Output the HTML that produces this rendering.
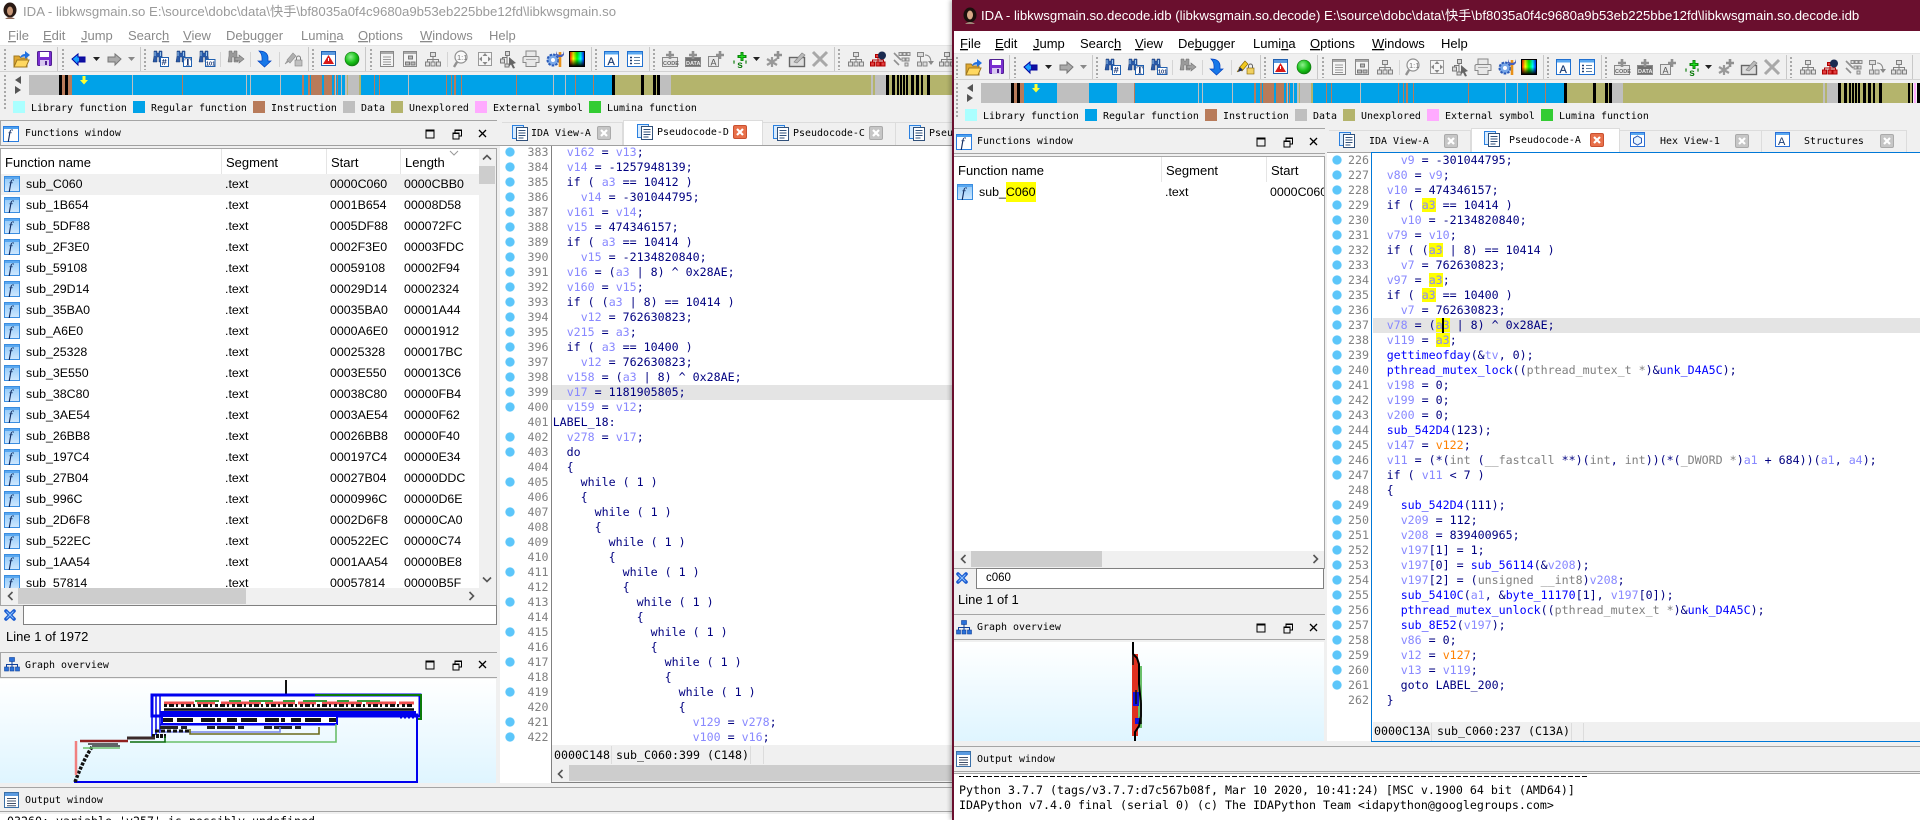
<!DOCTYPE html>
<html><head><meta charset="utf-8"><title>IDA</title>
<style>
html,body{margin:0;padding:0;width:1920px;height:820px;overflow:hidden;background:#f0f0f0}
#L,#R{position:absolute;top:0;height:820px;overflow:hidden;background:#f0f0f0;font:13px "Liberation Sans","Noto Sans CJK SC",sans-serif;color:#000}
#L{left:0;width:952px}
#R{left:952px;width:968px;box-shadow:-2px 0 4px rgba(0,0,0,.25)}
#R:before{content:"";position:absolute;left:0;top:0;width:1.5px;height:820px;background:#6a0f2e;z-index:9}
.a,.t,.ph,pre,svg.o{position:absolute}
.t{white-space:pre}
svg.o{left:0;top:0;overflow:visible}
.ph{background:#f0f0f0;border:1px solid #a5a5a5;border-width:1px 0 1px 1px;height:24px;box-sizing:content-box}
.m{font:9.96px "DejaVu Sans Mono",monospace;line-height:14px;white-space:pre;margin-top:1px}
pre{margin:0;font:11.63px/15px "DejaVu Sans Mono",monospace;color:#000080;white-space:pre}
pre b,pre i,pre u,pre s{font-weight:normal;font-style:normal;text-decoration:none}
pre b{color:#8888ff}pre i{color:#808080}pre u{color:#0000ff}pre s{color:#ff8000}
pre mark{background:#ffff00;color:#8888ff;padding:0}
.n{color:#808080}
.dot{position:absolute;width:10px;background:radial-gradient(circle at 5px 7px,#5cc6fa 4.2px,rgba(92,198,250,0) 5px) 0 0/10px 15px repeat-y}
.dot2{background-size:10px 30px}
.tab{position:absolute;box-sizing:border-box;background:#f0f0f0;border-top:1px solid #dcdcdc;border-right:1px solid #dcdcdc}
.tab.on{background:#fff;border:1px solid #dcdcdc;border-bottom:0}
.r{position:relative;height:21px;font-size:12.4px;line-height:21px;white-space:pre}
.r span{position:absolute;top:0}
.r svg{position:absolute;left:4px;top:2px;width:16px;height:16px}
.r span:nth-of-type(1){left:26px}
.r span:nth-of-type(2){left:225px}
.r span:nth-of-type(3){left:330px}
.r span:nth-of-type(4){left:404px}
.thumb{position:absolute;background:#cdcdcd}
.sb{position:absolute;background:#f0f0f0}
</style></head><body>
<svg style="position:absolute;width:0;height:0"><defs>
<linearGradient id="gf" x1="0" y1="0" x2="0" y2="1"><stop offset="0" stop-color="#8fc8f8"/><stop offset="1" stop-color="#cfe8ff"/></linearGradient>
<radialGradient id="gg" cx=".4" cy=".35" r=".7"><stop offset="0" stop-color="#8ff08f"/><stop offset=".6" stop-color="#18c018"/><stop offset="1" stop-color="#0a800a"/></radialGradient>
<linearGradient id="pal" x1="0" y1="0" x2="1" y2="0"><stop offset="0" stop-color="#f00"/><stop offset=".25" stop-color="#ff0"/><stop offset=".5" stop-color="#0f0"/><stop offset=".75" stop-color="#0ff"/><stop offset="1" stop-color="#00f"/></linearGradient>
<linearGradient id="gfade" x1="0" y1="0" x2="0" y2="1"><stop offset="0" stop-color="#fff"/><stop offset="1" stop-color="#dff5ff"/></linearGradient>
<linearGradient id="palv" x1="0" y1="0" x2="0" y2="1"><stop offset="0" stop-color="#000" stop-opacity=".2"/><stop offset=".5" stop-color="#000" stop-opacity="0"/><stop offset="1" stop-color="#000" stop-opacity=".95"/></linearGradient>
<symbol id="fi" viewBox="0 0 16 16"><rect x=".5" y=".5" width="15" height="15" fill="url(#gf)" stroke="#3a8de0"/><rect x="1" y="1" width="14" height="2" fill="#5aa8f0"/><text x="4.5" y="13" font-family="Liberation Serif" font-style="italic" font-size="14" fill="#102a60">f</text></symbol>
<symbol id="fh" viewBox="0 0 16 16"><rect x=".5" y=".5" width="15" height="15" fill="#fff" stroke="#2a7de0"/><rect x="1" y="1" width="14" height="2" fill="#4aa0f0"/><text x="4.5" y="13" font-family="Liberation Serif" font-style="italic" font-size="14" fill="#102a60">f</text></symbol>
<symbol id="doc" viewBox="0 0 16 16"><rect x=".5" y=".5" width="11" height="13" fill="#d8ecff" stroke="#2a80e0"/><rect x="4.5" y="2.5" width="11" height="13" fill="#fff" stroke="#30507a"/><path d="M6.5 5.5h7M6.5 8h7M6.5 10.500h7M6.5 13h5" stroke="#30507a"/></symbol>
<symbol id="cl" viewBox="0 0 14 14"><rect x=".5" y=".5" width="13" height="13" rx="1.500" fill="#c6c6c6" stroke="#aaa"/><path d="M4 4l6 6M10 4l-6 6" stroke="#fff" stroke-width="2.200"/></symbol>
<symbol id="cr" viewBox="0 0 14 14"><rect x=".5" y=".5" width="13" height="13" rx="1.500" fill="#e8704a" stroke="#c85030"/><path d="M4 4l6 6M10 4l-6 6" stroke="#fff" stroke-width="2.200"/></symbol>
<symbol id="tree" viewBox="0 0 16 15"><g fill="#2a70d8" stroke="#10409a" stroke-width=".6"><rect x="5.500" y=".5" width="5" height="4"/><rect x=".5" y="10" width="4" height="4"/><rect x="6" y="10" width="4" height="4"/><rect x="11.500" y="10" width="4" height="4"/></g><path d="M8 4.500v5.500M2.500 10V7.500h11V10" stroke="#10409a" fill="none"/></symbol>
<symbol id="out" viewBox="0 0 16 16"><rect x=".5" y=".5" width="14" height="15" fill="#fff" stroke="#3a70a8"/><rect x="1" y="1" width="13" height="3" fill="#5a9ae0"/><path d="M3 6.500h9M3 9h9M3 11.500h9M3 13.800h9" stroke="#40506a"/></symbol>
<symbol id="xx" viewBox="0 0 12 12"><path d="M2 2l8 8M10 2l-8 8" stroke="#1c5cd0" stroke-width="3.600" stroke-linecap="round"/><path d="M2.500 2.500l7 7M9.500 2.500l-7 7" stroke="#8cc4ff" stroke-width="1"/></symbol>
<symbol id="btn" viewBox="0 0 62 12"><rect x="1" y="2" width="8" height="8" fill="none" stroke="#000"/><path d="M1 2.500h8" stroke="#000" stroke-width="2"/><rect x="28" y="5" width="6" height="6" fill="none" stroke="#000"/><path d="M30 4.500V2h6.500v6H34" fill="none" stroke="#000"/><path d="M28 5.500h6M30 2.500h6.500" stroke="#000"/><path d="M54 2l7 7M61 2l-7 7" stroke="#000" stroke-width="1.300"/></symbol>
<g id="bino"><path d="M1 0h3v2h2V0h3v5l1 6H6V6H4v5H0l1-6z" fill="#2a5aa8" stroke="#1a3a70" stroke-width=".5"/><path d="M2 1v4M7.500 1v4" stroke="#9ac8f0"/></g>
<g id="binog"><path d="M1 0h3v2h2V0h3v5l1 6H6V6H4v5H0l1-6z" fill="#9a9a9a" stroke="#6a6a6a" stroke-width=".5"/></g>
<g id="grip"><path d="M0 0V21" stroke="#a8a8a8" stroke-width="2" stroke-dasharray="2 2"/></g>
<g id="grt"><g fill="#e0e0e0" stroke="#808080"><rect x="5.500" y=".5" width="5" height="4"/><rect x=".5" y="10" width="4" height="4"/><rect x="6" y="10" width="4" height="4"/><rect x="11.500" y="10" width="4" height="4"/></g><path d="M8 4.500v5.500M2.500 10V7.500h11V10" stroke="#808080" fill="none"/></g>
<g id="menu" font-size="13" fill="currentColor" font-family="Liberation Sans">
<text x="8" y="40"><tspan style="text-decoration:underline">F</tspan>ile</text>
<text x="43" y="40"><tspan style="text-decoration:underline">E</tspan>dit</text>
<text x="81" y="40"><tspan style="text-decoration:underline">J</tspan>ump</text>
<text x="128" y="40">Searc<tspan style="text-decoration:underline">h</tspan></text>
<text x="183" y="40"><tspan style="text-decoration:underline">V</tspan>iew</text>
<text x="226" y="40">De<tspan style="text-decoration:underline">b</tspan>ugger</text>
<text x="301" y="40">Lumi<tspan style="text-decoration:underline">n</tspan>a</text>
<text x="358" y="40"><tspan style="text-decoration:underline">O</tspan>ptions</text>
<text x="420" y="40"><tspan style="text-decoration:underline">W</tspan>indows</text>
<text x="489" y="40">Help</text>
</g>
<g id="tb">
<rect x="0" y="46" width="968" height="25" fill="#f0f0f0"/>
<path d="M0 45.500H968" stroke="#e4e4e4"/><path d="M0 71.500H968" stroke="#d2d2d2"/>
<path d="M57.500 47v24M140.500 47v24M308.500 47v24M365.500 47v24M591.500 47v24M649.500 47v24M834.500 47v24M960.500 47v24" stroke="#c8c8c8"/>
<path d="M220.500 52v15M250.500 52v15M279.500 52v15M447.500 52v15" stroke="#d4d4d4"/>
<use href="#grip" x="5" y="49"/><use href="#grip" x="63" y="49"/><use href="#grip" x="145" y="49"/><use href="#grip" x="313" y="49"/><use href="#grip" x="371" y="49"/><use href="#grip" x="596" y="49"/><use href="#grip" x="654" y="49"/><use href="#grip" x="839" y="49"/>
<path d="M5 75V111" stroke="#a8a8a8" stroke-width="2" stroke-dasharray="2 2"/>
<path d="M14 56h5l2 2h6v9H14z" fill="#e0a830" stroke="#a07820"/><path d="M14 67l3-7h12l-3 7z" fill="#ffd860" stroke="#a07820"/><path d="M20 58q1-4 5-4v-3l5 4-5 4v-2.500q-3 0-5 1.500z" fill="#2070e0"/>
<rect x="37.500" y="51.500" width="14" height="14" rx="1" fill="#7a2ed0" stroke="#502090"/><rect x="40" y="52" width="9" height="5" fill="#fff"/><rect x="40" y="60" width="9" height="6" fill="#d8c8f0"/><rect x="45" y="61" width="2" height="4" fill="#502090"/>
<path d="M72 59l6-5v3h7v5h-7v3z" fill="#19a0ff" stroke="#0000a0"/><path d="M79 57.500h6v4h-6z" fill="#1010a0"/>
<path d="M93 57h7l-3.500 4z" fill="#222"/><path d="M128 57h7l-3.500 4z" fill="#888"/>
<path d="M121 59l-6-5v3h-7v5h7v3z" fill="#aaa" stroke="#777"/>
<use href="#bino" x="153" y="51"/><rect x="160.500" y="57.500" width="8" height="9" fill="#fff" stroke="#2060b0"/><text x="161.500" y="65" font-size="9" font-weight="bold" font-family="Liberation Mono" fill="#103070">#</text>
<use href="#bino" x="176" y="51"/><rect x="183.500" y="57.500" width="8" height="9" fill="#fff" stroke="#2060b0"/><text x="184.500" y="65.500" font-size="10" font-weight="bold" font-family="Liberation Serif" fill="#103070">T</text>
<use href="#bino" x="199" y="51"/><rect x="205.500" y="59.500" width="9.500" height="7" fill="#fff" stroke="#2060b0"/><text x="206" y="65.500" font-size="5.500" font-weight="bold" font-family="Liberation Sans" fill="#103070">101</text>
<use href="#binog" x="228" y="51"/><path d="M244 59l-5-4v2.500h-4v3h4V63z" fill="#a0a0a0" stroke="#707070" stroke-width=".6"/>
<path d="M259 51q8 0 9 6v4h3l-6.500 6-6.500-6h4v-3q0-4-3-7z" fill="#1878e8" stroke="#0040c0" stroke-width=".7"/>
<rect x="321.500" y="51.500" width="14" height="14" fill="#fff" stroke="#2060b0"/><rect x="322" y="52" width="13" height="3" fill="#5a9ae0"/><path d="M328.500 55l5.500 9h-11z" fill="#d81818"/><path d="M328.500 58v3" stroke="#fff"/>
<circle cx="352" cy="59" r="7" fill="url(#gg)" stroke="#0a700a" stroke-width=".6"/>
<rect x="380.500" y="51.500" width="13" height="15" fill="#f4f4f4" stroke="#888"/><rect x="381" y="52" width="12" height="2" fill="#aaa"/><path d="M383 57h8M383 59.500h8M383 62h8M383 64.500h8" stroke="#999"/>
<rect x="403.500" y="51.500" width="13" height="15" fill="#f4f4f4" stroke="#888"/><rect x="404" y="52" width="12" height="2" fill="#aaa"/><g fill="#bbb" stroke="#777"><rect x="408.500" y="56" width="4" height="3"/><rect x="405.500" y="62" width="4" height="3"/><rect x="411" y="62" width="4" height="3"/></g>
<use href="#grt" x="425" y="52"/>
<circle cx="461" cy="57" r="6" fill="#fafafa" stroke="#909090" stroke-width="1.200"/><path d="M457 62l-3 5" stroke="#909090" stroke-width="2.400"/><text x="457" y="60" font-size="7.500" font-family="Liberation Sans" fill="#707070">1:1</text>
<rect x="478.500" y="52.500" width="13" height="13" fill="#f6f6f6" stroke="#999"/><path d="M485 53l2.500 3h-5zM485 65l2.500-3h-5zM479 59l3-2.500v5zM491 59l-3-2.500v5z" fill="#888"/>
<g transform="translate(500 51)"><g fill="#d8d8d8" stroke="#777"><rect x="5.500" y=".5" width="4" height="4"/><rect x=".5" y="8" width="4" height="4"/><rect x="5" y="13" width="4" height="3"/></g><path d="M7 4.500v8M2.500 8V6.500h5" stroke="#777" fill="none"/><path d="M9 6l7 6-3 1 2 4-2 .5-2-4-2 2z" fill="#666"/></g>
<path d="M526 56v-5h10v5M524 56.500h14a1 1 0 0 1 1 1v5h-3v4h-10v-4h-3v-5z" fill="#e8e8e8" stroke="#888"/><path d="M526 59.500h10" stroke="#aaa"/>
<circle cx="553" cy="60" r="5.500" fill="#7aa8e8" stroke="#2a5ab8" stroke-width="2" stroke-dasharray="2.500 1.200"/><circle cx="553" cy="60" r="2" fill="#fff"/><path d="M560 52v15" stroke="#e89018" stroke-width="2.600"/><path d="M556 51l1 3 3 1 3-1 1-3v4l-2 2h-4l-2-2z" fill="#4a60b8"/>
<rect x="569.500" y="51.500" width="15" height="15" fill="url(#pal)" stroke="#000"/><rect x="570" y="52" width="14" height="14" fill="url(#palv)"/>
<rect x="604.500" y="51.500" width="14" height="15" fill="#fff" stroke="#2070d0"/><rect x="605" y="52" width="13" height="2.500" fill="#5aa8f0"/><text x="607.500" y="65" font-size="11" font-family="Liberation Sans" fill="#1a3a70" stroke="#1a3a70" stroke-width=".2">A</text>
<rect x="627.500" y="51.500" width="15" height="15" fill="#fff" stroke="#2070d0"/><rect x="628" y="52" width="14" height="2.500" fill="#5aa8f0"/><path d="M630 57.500h2M630 60.500h2M630 63.500h2" stroke="#1a3a70" stroke-width="1.400"/><path d="M634 57.500h6M634 60.500h6M634 63.500h6" stroke="#6080a0"/>
<g fill="#e8e8e8" stroke="#888"><rect x="662.500" y="57.500" width="15" height="9"/><rect x="685.500" y="57.500" width="15" height="9" fill="#707070"/><rect x="708.500" y="56.500" width="10" height="10"/></g>
<text x="663" y="65" font-size="5.500" font-weight="bold" font-family="Liberation Sans" fill="#666">CODE</text><text x="686" y="65" font-size="5.500" font-weight="bold" font-family="Liberation Sans" fill="#eee">DATA</text><text x="710.500" y="65.500" font-size="9" font-family="Liberation Sans" fill="#555">A</text>
<path d="M670 51v8M666 55h8M693 51v8M689 55h8M720 51v8M716 55h8" stroke="#909090" stroke-width="2.600"/>
<path d="M742 52v9M737.500 56.500h9" stroke="#0a8a0a" stroke-width="3"/><path d="M742 53v7M739 56.500h6" stroke="#20e020" stroke-width="1"/><text x="731" y="68" font-size="10" font-weight="bold" font-family="Liberation Mono" fill="#0a7a0a">'s'</text>
<path d="M753 57h7l-3.500 4z" fill="#222"/>
<path d="M772 57v10M767 59l10 6M767 65l10-6" stroke="#999" stroke-width="2.200"/><path d="M778 51v8M774 55h8" stroke="#909090" stroke-width="2.600"/>
<rect x="789.500" y="57.500" width="15" height="9" fill="#ddd" stroke="#666" stroke-width="1.400"/><path d="M794 62l8-9 3 2-8 8z" fill="#bbb" stroke="#888" stroke-width=".7"/>
<path d="M813 52l14 14M827 52l-14 14" stroke="#a8a8a8" stroke-width="3"/>
<use href="#grt" x="848" y="52"/>
<g transform="translate(870 52)"><g fill="#e04040" stroke="#b00000"><rect x="5.500" y="2.500" width="4" height="3"/><rect x=".5" y="10" width="4" height="4"/><rect x="6" y="10" width="4" height="4"/><rect x="11" y="10" width="4" height="4"/></g><path d="M8 5.500v4.500M2.500 10V8h11v2" stroke="#b00000" fill="none"/><circle cx="12" cy="3.500" r="4" fill="#1a2a50"/></g>
<g transform="translate(893 52)"><path d="M1 1l7 7M1 8l5 5" stroke="#909090" stroke-width="1.600"/><g fill="#ddd" stroke="#888"><rect x="6" y=".5" width="3" height="3"/><rect x="10" y=".5" width="3" height="3"/><rect x="14" y=".5" width="3" height="3"/><rect x="9" y="6" width="3" height="3"/><rect x="13" y="6" width="3" height="3"/><rect x="12" y="11" width="3" height="3"/></g></g>
<g transform="translate(917 52)"><g fill="#ddd" stroke="#888"><rect x=".5" y=".5" width="6" height="4"/><rect x=".5" y="10" width="4" height="4"/><rect x="6" y="10" width="4" height="4"/></g><path d="M3.500 4.500V10M8 3q6 0 6 8" fill="none" stroke="#888"/><path d="M11 9l3 4 3-4z" fill="#888"/></g>
<use href="#grt" x="939" y="52"/>
<path d="M15 80l6-4v8zM21 90l-6-4v8z" fill="#555"/>
<g fill="none" stroke-width="20">
<path stroke="#00a2e8" d="M29 85H612"/>
<path stroke="#bfbfbf" d="M29 85H59M246 85h1M250 85h1M280 85h1M132 85h1M345 85h14M335 85h1M341 85h1M408 85h1M553 85h1M565 85h1M660 85h11M871 85h2M875 85h11"/>
<path stroke="#000" d="M59 85h3M65 85h3M612 85h3M641 85h3M653 85h3M657 85h3M886 85h3M892 85h3M897 85h2M900 85h2M903 85h2M906 85h2M911 85h3M916 85h3M921 85h2M927 85h3M956 85h2M960 85h1M965 85h3"/>
<path stroke="#b87b5a" d="M62 85h3M68 85h4M182 85h1M302 85h2M308 85h2M311 85h11M324 85h8M334 85h1M337 85h1M374 85h1M379 85h1M446 85h1M451 85h1M454 85h2M461 85h1M516 85h1M575 85h1M593 85h1"/>
<path stroke="#b4b46c" d="M615 85h26M644 85h9M656 85h1M671 85h200M873 85h2M889 85h3M895 85h2M899 85h1M902 85h1M905 85h1M908 85h3M914 85h2M919 85h2M923 85h4M930 85h26M347 85h1M359 85h2M958 85h2"/>
<path stroke="#ffaaff" d="M962 85h2"/>
</g>
<path d="M82.500 76h3v4h2.500l-4 4.500-4-4.500h2.500z" fill="#ffff30"/>
<g font-family="DejaVu Sans Mono" font-size="9.960" fill="#000">
<text x="31" y="111">Library function</text><text x="151" y="111">Regular function</text><text x="271" y="111">Instruction</text><text x="361" y="111">Data</text><text x="409" y="111">Unexplored</text><text x="493" y="111">External symbol</text><text x="607" y="111">Lumina function</text>
</g>
<rect x="13" y="101" width="12" height="12" fill="#aaffff"/><rect x="133" y="101" width="12" height="12" fill="#00a2e8"/><rect x="253" y="101" width="12" height="12" fill="#b87b5a"/><rect x="343" y="101" width="12" height="12" fill="#bfbfbf"/><rect x="391" y="101" width="12" height="12" fill="#b4b46c"/><rect x="475" y="101" width="12" height="12" fill="#ffaaff"/><rect x="589" y="101" width="12" height="12" fill="#33cc33"/>
</g>
</defs></svg>

<div id="L">
<div class="a" style="left:0;top:0;width:952px;height:45px;background:#fff"></div>
<svg class="o" width="952" height="820" viewBox="0 0 952 820">
<g style="color:#8a8a8a"><use href="#menu"/></g>
<use href="#tb"/>
<path d="M287 60l6-7 3 3-6 7zM285 64l3-2-1-1z" fill="#b0b0b0" stroke="#909090" stroke-width=".6"/><rect x="295" y="60" width="7" height="6" fill="#c0c0c0" stroke="#808080" stroke-width=".6"/><path d="M296.500 60v-2a2 2 0 0 1 4 0v2" fill="none" stroke="#808080"/>
<ellipse cx="10" cy="10" rx="6.500" ry="7.500" fill="#2a1a14"/><ellipse cx="10" cy="11" rx="3" ry="4.500" fill="#c89878"/><path d="M5 19q5-4 10 0z" fill="#8a6858"/>
</svg>
<div class="t" style="left:23px;top:3px;line-height:18px;font-size:13.2px;color:#9a9a9a">IDA - libkwsgmain.so E:\source\dobc\data\快手\bf8035a0f4c9680a9b53eb225bbe12fd\libkwsgmain.so</div>

<div class="ph" style="left:0;top:120px;width:496px"></div>
<svg class="a" style="left:3px;top:126px" width="16" height="16"><use href="#fh"/></svg>
<div class="t m" style="left:25px;top:126px">Functions window</div>
<svg class="a" style="left:425px;top:128px" width="62" height="12"><use href="#btn"/></svg>

<div class="a" style="left:0;top:148px;width:495px;height:456px;background:#fff;border:1px solid #a5a5a5;overflow:hidden">
<div class="t" style="left:4px;top:1px;line-height:25px;font-size:13px">Function name</div>
<div class="t" style="left:225px;top:1px;line-height:25px;font-size:13px">Segment</div>
<div class="t" style="left:330px;top:1px;line-height:25px;font-size:13px">Start</div>
<div class="t" style="left:404px;top:1px;line-height:25px;font-size:13px">Length</div>
<div class="a" style="left:220px;top:0;width:1px;height:25px;background:#e5e5e5"></div>
<div class="a" style="left:325px;top:0;width:1px;height:25px;background:#e5e5e5"></div>
<div class="a" style="left:399px;top:0;width:1px;height:25px;background:#e5e5e5"></div>
<svg class="a" style="left:448px;top:1px" width="10" height="6"><path d="M1 1l4 4 4-4" fill="none" stroke="#999"/></svg>
<div class="a" style="left:-1px;top:25px;width:480px;height:414px;overflow:hidden">
<div class="r" style="background:#f0f0f0"><svg><use href="#fi"/></svg><span>sub_C060</span><span>.text</span><span>0000C060</span><span>0000CBB0</span></div>
<div class="r"><svg><use href="#fi"/></svg><span>sub_1B654</span><span>.text</span><span>0001B654</span><span>00008D58</span></div>
<div class="r"><svg><use href="#fi"/></svg><span>sub_5DF88</span><span>.text</span><span>0005DF88</span><span>000072FC</span></div>
<div class="r"><svg><use href="#fi"/></svg><span>sub_2F3E0</span><span>.text</span><span>0002F3E0</span><span>00003FDC</span></div>
<div class="r"><svg><use href="#fi"/></svg><span>sub_59108</span><span>.text</span><span>00059108</span><span>00002F94</span></div>
<div class="r"><svg><use href="#fi"/></svg><span>sub_29D14</span><span>.text</span><span>00029D14</span><span>00002324</span></div>
<div class="r"><svg><use href="#fi"/></svg><span>sub_35BA0</span><span>.text</span><span>00035BA0</span><span>00001A44</span></div>
<div class="r"><svg><use href="#fi"/></svg><span>sub_A6E0</span><span>.text</span><span>0000A6E0</span><span>00001912</span></div>
<div class="r"><svg><use href="#fi"/></svg><span>sub_25328</span><span>.text</span><span>00025328</span><span>000017BC</span></div>
<div class="r"><svg><use href="#fi"/></svg><span>sub_3E550</span><span>.text</span><span>0003E550</span><span>000013C6</span></div>
<div class="r"><svg><use href="#fi"/></svg><span>sub_38C80</span><span>.text</span><span>00038C80</span><span>00000FB4</span></div>
<div class="r"><svg><use href="#fi"/></svg><span>sub_3AE54</span><span>.text</span><span>0003AE54</span><span>00000F62</span></div>
<div class="r"><svg><use href="#fi"/></svg><span>sub_26BB8</span><span>.text</span><span>00026BB8</span><span>00000F40</span></div>
<div class="r"><svg><use href="#fi"/></svg><span>sub_197C4</span><span>.text</span><span>000197C4</span><span>00000E34</span></div>
<div class="r"><svg><use href="#fi"/></svg><span>sub_27B04</span><span>.text</span><span>00027B04</span><span>00000DDC</span></div>
<div class="r"><svg><use href="#fi"/></svg><span>sub_996C</span><span>.text</span><span>0000996C</span><span>00000D6E</span></div>
<div class="r"><svg><use href="#fi"/></svg><span>sub_2D6F8</span><span>.text</span><span>0002D6F8</span><span>00000CA0</span></div>
<div class="r"><svg><use href="#fi"/></svg><span>sub_522EC</span><span>.text</span><span>000522EC</span><span>00000C74</span></div>
<div class="r"><svg><use href="#fi"/></svg><span>sub_1AA54</span><span>.text</span><span>0001AA54</span><span>00000BE8</span></div>
<div class="r"><svg><use href="#fi"/></svg><span>sub_57814</span><span>.text</span><span>00057814</span><span>00000B5F</span></div>
</div>
<div class="sb" style="left:478px;top:0;width:17px;height:439px"></div>
<div class="thumb" style="left:478px;top:17px;width:16px;height:18px"></div>
<svg class="a" style="left:481px;top:5px" width="10" height="7"><path d="M1 5.500l4-4 4 4" fill="none" stroke="#555" stroke-width="1.600"/></svg>
<svg class="a" style="left:481px;top:427px" width="10" height="7"><path d="M1 1.500l4 4 4-4" fill="none" stroke="#555" stroke-width="1.600"/></svg>
<div class="sb" style="left:0;top:439px;width:495px;height:17px"></div>
<div class="thumb" style="left:17px;top:439px;width:228px;height:16px"></div>
<svg class="a" style="left:6px;top:442px" width="7" height="10"><path d="M5.500 1l-4 4 4 4" fill="none" stroke="#555" stroke-width="1.600"/></svg>
<svg class="a" style="left:467px;top:442px" width="7" height="10"><path d="M1.500 1l4 4-4 4" fill="none" stroke="#555" stroke-width="1.600"/></svg>
</div>

<svg class="a" style="left:4px;top:609px" width="12" height="12"><use href="#xx"/></svg>
<div class="a" style="left:23px;top:605px;width:472px;height:18px;background:#fff;border:1px solid #808080"></div>
<div class="t" style="left:6px;top:629px;line-height:16px;font-size:13px">Line 1 of 1972</div>

<div class="ph" style="left:0;top:652px;width:496px"></div>
<svg class="a" style="left:4px;top:657px" width="16" height="15"><use href="#tree"/></svg>
<div class="t m" style="left:25px;top:658px">Graph overview</div>
<svg class="a" style="left:425px;top:659px" width="62" height="12"><use href="#btn"/></svg>
<svg class="a" style="left:0;top:679px" width="496" height="104" viewBox="0 679 496 104">
<rect x="0" y="679" width="496" height="104" fill="url(#gfade)"/>
<path d="M286 680v14" stroke="#111" stroke-width="2"/>
<rect x="152" y="695" width="268" height="21" fill="#fff" stroke="#0000ee" stroke-width="3"/>
<path d="M315 695h106v24h-3" fill="none" stroke="#0a7a0a" stroke-width="2"/>
<path d="M152 695v42M156 695v40M160 695v38" stroke="#0000ee" stroke-width="1.500"/>
<path d="M164 703H414" stroke="#f05050" stroke-width="3" stroke-dasharray="30 3 18 6 40 4"/>
<path d="M195 701H380" stroke="#3a9a3a" stroke-width="2" stroke-dasharray="24 10 12 8"/>
<path d="M164 705.500H414" stroke="#111" stroke-width="3" stroke-dasharray="3 2 5 2 2 3"/>
<path d="M164 709.500H414" stroke="#0a0a0a" stroke-width="2.500"/>
<path d="M160 713.500H416" stroke="#0000ee" stroke-width="5"/>
<path d="M400 716H418" stroke="#0000ee" stroke-width="5" stroke-dasharray="2 2"/>
<rect x="162" y="716" width="175" height="8" fill="#fff" stroke="#0000ee" stroke-width="2"/>
<path d="M163 720H336" stroke="#111" stroke-width="4" stroke-dasharray="10 4 16 8 14 2 4 6"/>
<path d="M160 724.500H336" stroke="#0000ee" stroke-width="2"/>
<path d="M160 727.500H320" stroke="#222" stroke-width="3" stroke-dasharray="18 3 6 20 8 2"/>
<path d="M280 727v5h-120" fill="none" stroke="#7a88e8" stroke-width="1.600"/>
<path d="M319 727v7H190v-5" fill="none" stroke="#6a6a1a" stroke-width="1.600"/>
<path d="M336 724v18H165" fill="none" stroke="#6abf6a" stroke-width="1.600"/>
<path d="M155 731H190" stroke="#111" stroke-width="3" stroke-dasharray="4 2"/>
<path d="M152 736H166" stroke="#111" stroke-width="4" stroke-dasharray="3 1"/>
<path d="M417 716V782H74" fill="none" stroke="#0000ee" stroke-width="2"/>
<path d="M165 736V742H130" fill="none" stroke="#0a6a0a" stroke-width="1.500"/>
<path d="M127 738H155" stroke="#3a2a2a" stroke-width="3"/>
<path d="M80 741H128" stroke="#902020" stroke-width="2.500"/>
<path d="M88 744H118M92 746H120" stroke="#333" stroke-width="1.500"/>
<path d="M92 747q-4 6-8 14t-9 21" fill="none" stroke="#111" stroke-width="3.500" stroke-dasharray="3 1.500"/>
<path d="M76 741v34" stroke="#f08080" stroke-width="2.500"/><path d="M83 748h37" stroke="#6abf6a" stroke-width="1.500"/>
</svg>

<div class="a" style="left:0;top:145px;width:952px;height:1px;background:#a0a0a0"></div>
<div class="tab" style="left:502px;top:122px;width:121px;height:23px"></div>
<div class="tab" style="left:763px;top:122px;width:133px;height:23px"></div>
<div class="tab" style="left:896px;top:122px;width:60px;height:23px"></div>
<div class="tab on" style="left:623px;top:120px;width:140px;height:25px"></div>
<svg class="a" style="left:512px;top:125px" width="16" height="16"><use href="#doc"/></svg>
<svg class="a" style="left:637px;top:124px" width="16" height="16"><use href="#doc"/></svg>
<svg class="a" style="left:773px;top:125px" width="16" height="16"><use href="#doc"/></svg>
<svg class="a" style="left:909px;top:125px" width="16" height="16"><use href="#doc"/></svg>
<div class="t m" style="left:531px;top:126px">IDA View-A</div>
<div class="t m" style="left:657px;top:125px">Pseudocode-D</div>
<div class="t m" style="left:793px;top:126px">Pseudocode-C</div>
<div class="t m" style="left:929px;top:126px">Pseudocode-B</div>
<svg class="a" style="left:597px;top:126px" width="14" height="14"><use href="#cl"/></svg>
<svg class="a" style="left:733px;top:125px" width="14" height="14"><use href="#cr"/></svg>
<svg class="a" style="left:869px;top:126px" width="14" height="14"><use href="#cl"/></svg>

<div class="a" style="left:500px;top:146px;width:52px;height:637px;background:#fff"></div>
<div class="a" style="left:552px;top:146px;width:400px;height:636px;background:#fff"></div>
<div class="a" style="left:551px;top:146px;width:1px;height:637px;background:#808080"></div>
<div class="a" style="left:552px;top:385px;width:400px;height:15px;background:#e4e4e4"></div>
<div class="dot" style="left:505px;top:145px;height:270px"></div>
<div class="dot" style="left:505px;top:430px;height:30px"></div>
<div class="dot dot2" style="left:505px;top:475px;height:270px"></div>
<div class="dot" style="left:505px;top:730px;height:15px"></div>
<pre class="n" style="left:527.500px;top:145px">383
384
385
386
387
388
389
390
391
392
393
394
395
396
397
398
399
400
401
402
403
404
405
406
407
408
409
410
411
412
413
414
415
416
417
418
419
420
421
422</pre>
<pre style="left:552.700px;top:145px;width:399px;height:600px;overflow:hidden">  <b>v162</b> = <b>v13</b>;
  <b>v14</b> = -1257948139;
  if ( <b>a3</b> == 10412 )
    <b>v14</b> = -301044795;
  <b>v161</b> = <b>v14</b>;
  <b>v15</b> = 474346157;
  if ( <b>a3</b> == 10414 )
    <b>v15</b> = -2134820840;
  <b>v16</b> = (<b>a3</b> | 8) ^ 0x28AE;
  <b>v160</b> = <b>v15</b>;
  if ( (<b>a3</b> | 8) == 10414 )
    <b>v12</b> = 762630823;
  <b>v215</b> = <b>a3</b>;
  if ( <b>a3</b> == 10400 )
    <b>v12</b> = 762630823;
  <b>v158</b> = (<b>a3</b> | 8) ^ 0x28AE;
  <b>v17</b> = 1181905805;
  <b>v159</b> = <b>v12</b>;
LABEL_18:
  <b>v278</b> = <b>v17</b>;
  do
  {
    while ( 1 )
    {
      while ( 1 )
      {
        while ( 1 )
        {
          while ( 1 )
          {
            while ( 1 )
            {
              while ( 1 )
              {
                while ( 1 )
                {
                  while ( 1 )
                  {
                    <b>v129</b> = <b>v278</b>;
                    <b>v100</b> = <b>v16</b>;</pre>
<div class="a" style="left:552px;top:745px;width:400px;height:20px;background:#f0f0f0"></div>
<div class="a" style="left:611px;top:746px;width:1px;height:18px;background:#dcdcdc"></div>
<div class="a" style="left:750px;top:746px;width:1px;height:18px;background:#dcdcdc"></div>
<div class="a" style="left:763px;top:746px;width:1px;height:18px;background:#dcdcdc"></div>
<pre style="left:554px;top:748px;color:#000">0000C148</pre>
<pre style="left:616px;top:748px;color:#000">sub_C060:399 (C148)</pre>
<div class="sb" style="left:552px;top:765px;width:400px;height:17px"></div>
<div class="thumb" style="left:569px;top:765px;width:383px;height:16px"></div>
<svg class="a" style="left:557px;top:769px" width="7" height="10"><path d="M5.500 1l-4 4 4 4" fill="none" stroke="#555" stroke-width="1.600"/></svg>
<div class="a" style="left:552px;top:782px;width:400px;height:1px;background:#808080"></div>

<div class="a" style="left:0;top:787px;width:952px;height:25px;border:1px solid #a5a5a5;border-width:1px 0;background:#f0f0f0;box-sizing:border-box"></div>
<svg class="a" style="left:4px;top:792px" width="16" height="16"><use href="#out"/></svg>
<div class="t m" style="left:25px;top:793px">Output window</div>
<div class="a" style="left:0;top:814px;width:952px;height:6px;background:#fff;overflow:hidden"></div>
<pre style="left:7px;top:814px;color:#000;height:6px;overflow:hidden">03260: variable 'v257' is possibly undefined</pre>
</div>

<div id="R">
<div class="a" style="left:0;top:0;width:968px;height:31px;background:#6a0f2e"></div>
<div class="a" style="left:0;top:31px;width:968px;height:22px;background:#fff"></div>
<svg class="o" width="968" height="820" viewBox="0 0 968 820">
<use href="#menu" y="8" style="color:#000"/>
<use href="#tb" y="8"/>
<path d="M105 93H137M165 93H182" stroke="#bfbfbf" stroke-width="20"/>
<path d="M287 68l6-7 3 3-6 7zM285 72l3-2-1-1z" fill="#f0c820" stroke="#806000" stroke-width=".6"/><path d="M286 72l5-2-3-3z" fill="#1a2a60"/><rect x="295" y="68" width="7" height="6" fill="#f0d060" stroke="#806000" stroke-width=".6"/><path d="M296.500 68v-2a2 2 0 0 1 4 0v2" fill="none" stroke="#606060"/>
<ellipse cx="18" cy="15" rx="6.500" ry="7.500" fill="#1a0f0c"/><ellipse cx="18" cy="15" rx="3" ry="4.500" fill="#d8a888"/><path d="M13 24q5-4 10 0z" fill="#a08878"/>
</svg>
<div class="t" style="left:29px;top:7px;line-height:18px;font-size:13.2px;color:#fff">IDA - libkwsgmain.so.decode.idb (libkwsgmain.so.decode) E:\source\dobc\data\快手\bf8035a0f4c9680a9b53eb225bbe12fd\libkwsgmain.so.decode.idb</div>

<div class="ph" style="left:1px;top:128px;width:371px"></div>
<svg class="a" style="left:4px;top:134px" width="16" height="16"><use href="#fh"/></svg>
<div class="t m" style="left:25px;top:134px">Functions window</div>
<svg class="a" style="left:304px;top:136px" width="62" height="12"><use href="#btn"/></svg>

<div class="a" style="left:1px;top:156px;width:370px;height:411px;background:#fff;border:1px solid #a5a5a5;overflow:hidden">
<div class="t" style="left:4px;top:1px;line-height:25px">Function name</div>
<div class="t" style="left:212px;top:1px;line-height:25px">Segment</div>
<div class="t" style="left:317px;top:1px;line-height:25px">Start</div>
<div class="a" style="left:207px;top:0;width:1px;height:25px;background:#e5e5e5"></div>
<div class="a" style="left:312px;top:0;width:1px;height:25px;background:#e5e5e5"></div>
<div class="a" style="left:0;top:25px;width:370px;height:21px;overflow:hidden"><div class="r"><svg style="left:3px"><use href="#fi"/></svg><span style="left:25px">sub_<mark style="background:#ff0;color:#000;padding:3px 0">C060</mark></span><span style="left:211px">.text</span><span style="left:316px">0000C060</span></div></div>
<div class="sb" style="left:0;top:394px;width:370px;height:17px"></div>
<div class="thumb" style="left:17px;top:394px;width:131px;height:16px"></div>
<svg class="a" style="left:6px;top:397px" width="7" height="10"><path d="M5.500 1l-4 4 4 4" fill="none" stroke="#555" stroke-width="1.600"/></svg>
<svg class="a" style="left:358px;top:397px" width="7" height="10"><path d="M1.500 1l4 4-4 4" fill="none" stroke="#555" stroke-width="1.600"/></svg>
</div>
<svg class="a" style="left:4px;top:572px" width="12" height="12"><use href="#xx"/></svg>
<div class="a" style="left:24px;top:568px;width:346px;height:19px;background:#fff;border:1px solid #808080"></div>
<div class="t" style="left:34px;top:570px;line-height:16px;font-size:11.500px">c060</div>
<div class="t" style="left:6px;top:592px;line-height:16px">Line 1 of 1</div>

<div class="ph" style="left:1px;top:614px;width:371px"></div>
<svg class="a" style="left:4px;top:620px" width="16" height="15"><use href="#tree"/></svg>
<div class="t m" style="left:25px;top:620px">Graph overview</div>
<svg class="a" style="left:304px;top:622px" width="62" height="12"><use href="#btn"/></svg>
<svg class="a" style="left:1px;top:642px" width="371" height="99" viewBox="953 642 371 99">
<rect x="953" y="642" width="371" height="99" fill="url(#gfade)"/>
<path d="M1140 666V728" stroke="#6abf6a" stroke-width="4"/>
<path d="M1135 654V736" stroke="#e03020" stroke-width="6"/>
<path d="M1133 692h6v14h-6zM1135 718h6v6h-6z" fill="#1010e0"/>
<path d="M1133 642v12l4 4 2 6v20l2 20v12l-2 10-4 6v9" fill="none" stroke="#000" stroke-width="2"/>
<path d="M1133 655v10M1141 700v24M1136 690v14" stroke="#111" stroke-width="1.500"/>
</svg>
<div class="a" style="left:1px;top:746px;width:968px;height:26px;border:1px solid #a5a5a5;border-width:1px 0;background:#f0f0f0;box-sizing:border-box"></div>
<svg class="a" style="left:4px;top:751px" width="16" height="16"><use href="#out"/></svg>
<div class="t m" style="left:25px;top:752px">Output window</div>
<div class="a" style="left:1px;top:773px;width:968px;height:47px;background:#fff;border-top:1px solid #a5a5a5;box-sizing:border-box"></div>
<svg class="a" style="left:7px;top:775px" width="630" height="3"><path d="M0 1.500H630" stroke="#000" stroke-dasharray="5 2"/></svg>
<pre style="left:7px;top:783px;color:#000">Python 3.7.7 (tags/v3.7.7:d7c567b08f, Mar 10 2020, 10:41:24) [MSC v.1900 64 bit (AMD64)]
IDAPython v7.4.0 final (serial 0) (c) The IDAPython Team &lt;idapython@googlegroups.com&gt;</pre>

<div class="tab" style="left:377px;top:130px;width:142px;height:22px"></div>
<div class="tab" style="left:668px;top:130px;width:142px;height:22px"></div>
<div class="tab" style="left:810px;top:130px;width:145px;height:22px"></div>
<div class="tab on" style="left:519px;top:128px;width:149px;height:24px"></div>
<svg class="a" style="left:387px;top:132px" width="16" height="16"><use href="#doc"/></svg>
<svg class="a" style="left:532px;top:131px" width="16" height="16"><use href="#doc"/></svg>
<svg class="a" style="left:678px;top:132px" width="15" height="15"><rect x=".5" y=".5" width="14" height="14" fill="#fff" stroke="#2a70d8"/><rect x="1" y="1" width="13" height="2" fill="#5aa8f0"/><path d="M7.500 4l4 2.300v4.400l-4 2.300-4-2.300V6.300z" fill="#e8f4ff" stroke="#2a5ab8"/></svg>
<svg class="a" style="left:823px;top:132px" width="15" height="15"><rect x=".5" y=".5" width="14" height="14" fill="#fff" stroke="#2a70d8"/><rect x="1" y="1" width="13" height="2" fill="#5aa8f0"/><text x="3" y="13" font-size="11" font-family="Liberation Sans" fill="#1a3a70">A</text></svg>
<div class="t m" style="left:417px;top:134px">IDA View-A</div>
<div class="t m" style="left:557px;top:133px">Pseudocode-A</div>
<div class="t m" style="left:708px;top:134px">Hex View-1</div>
<div class="t m" style="left:852px;top:134px">Structures</div>
<svg class="a" style="left:492px;top:134px" width="14" height="14"><use href="#cl"/></svg>
<svg class="a" style="left:638px;top:133px" width="14" height="14"><use href="#cr"/></svg>
<svg class="a" style="left:783px;top:134px" width="14" height="14"><use href="#cl"/></svg>
<svg class="a" style="left:928px;top:134px" width="14" height="14"><use href="#cl"/></svg>

<div class="a" style="left:375px;top:153px;width:44px;height:588px;background:#fff"></div>
<div class="a" style="left:419px;top:152px;width:549px;height:590px;background:#fff;border-top:1.500px solid #0078d7;border-left:1.500px solid #0078d7;border-bottom:1.500px solid #0078d7;box-sizing:border-box"></div>
<div class="a" style="left:375px;top:152px;width:44px;height:1px;background:#a5a5a5"></div>
<div class="a" style="left:421px;top:318px;width:547px;height:15px;background:#e4e4e4"></div>
<div class="dot" style="left:380px;top:153px;height:330px"></div>
<div class="dot" style="left:380px;top:498px;height:195px"></div>
<pre class="n" style="left:396px;top:153px">226
227
228
229
230
231
232
233
234
235
236
237
238
239
240
241
242
243
244
245
246
247
248
249
250
251
252
253
254
255
256
257
258
259
260
261
262</pre>
<pre style="left:420.700px;top:153px">    <b>v9</b> = -301044795;
  <b>v80</b> = <b>v9</b>;
  <b>v10</b> = 474346157;
  if ( <mark>a3</mark> == 10414 )
    <b>v10</b> = -2134820840;
  <b>v79</b> = <b>v10</b>;
  if ( (<mark>a3</mark> | 8) == 10414 )
    <b>v7</b> = 762630823;
  <b>v97</b> = <mark>a3</mark>;
  if ( <mark>a3</mark> == 10400 )
    <b>v7</b> = 762630823;
  <b>v78</b> = (<mark>a3</mark> | 8) ^ 0x28AE;
  <b>v119</b> = <mark>a3</mark>;
  <u>gettimeofday</u>(&amp;<b>tv</b>, 0);
  <u>pthread_mutex_lock</u>((<i>pthread_mutex_t *</i>)&amp;<u>unk_D4A5C</u>);
  <b>v198</b> = 0;
  <b>v199</b> = 0;
  <b>v200</b> = 0;
  <u>sub_542D4</u>(123);
  <b>v147</b> = <s>v122</s>;
  <b>v11</b> = (*(<i>int</i> (<i>__fastcall</i> **)(<i>int</i>, <i>int</i>))(*(<i>_DWORD *</i>)<b>a1</b> + 684))(<b>a1</b>, <b>a4</b>);
  if ( <b>v11</b> &lt; 7 )
  {
    <u>sub_542D4</u>(111);
    <b>v209</b> = 112;
    <b>v208</b> = 839400965;
    <b>v197</b>[1] = 1;
    <b>v197</b>[0] = <u>sub_56114</u>(&amp;<b>v208</b>);
    <b>v197</b>[2] = (<i>unsigned __int8</i>)<b>v208</b>;
    <u>sub_5410C</u>(<b>a1</b>, &amp;<u>byte_11170</u>[1], <b>v197</b>[0]);
    <u>pthread_mutex_unlock</u>((<i>pthread_mutex_t *</i>)&amp;<u>unk_D4A5C</u>);
    <u>sub_8E52</u>(<b>v197</b>);
    <b>v86</b> = 0;
    <b>v12</b> = <s>v127</s>;
    <b>v13</b> = <b>v119</b>;
    goto LABEL_200;
  }</pre>
<div class="a" style="left:490px;top:318px;width:2px;height:15px;background:#000"></div>
<div class="a" style="left:420.500px;top:722px;width:548px;height:19px;background:#f0f0f0"></div>
<div class="a" style="left:479px;top:723px;width:1px;height:18px;background:#dcdcdc"></div>
<div class="a" style="left:619px;top:723px;width:1px;height:18px;background:#dcdcdc"></div>
<div class="a" style="left:631px;top:723px;width:1px;height:18px;background:#dcdcdc"></div>
<pre style="left:422px;top:724px;color:#000">0000C13A</pre>
<pre style="left:485px;top:724px;color:#000">sub_C060:237 (C13A)</pre>
</div>
</body></html>
